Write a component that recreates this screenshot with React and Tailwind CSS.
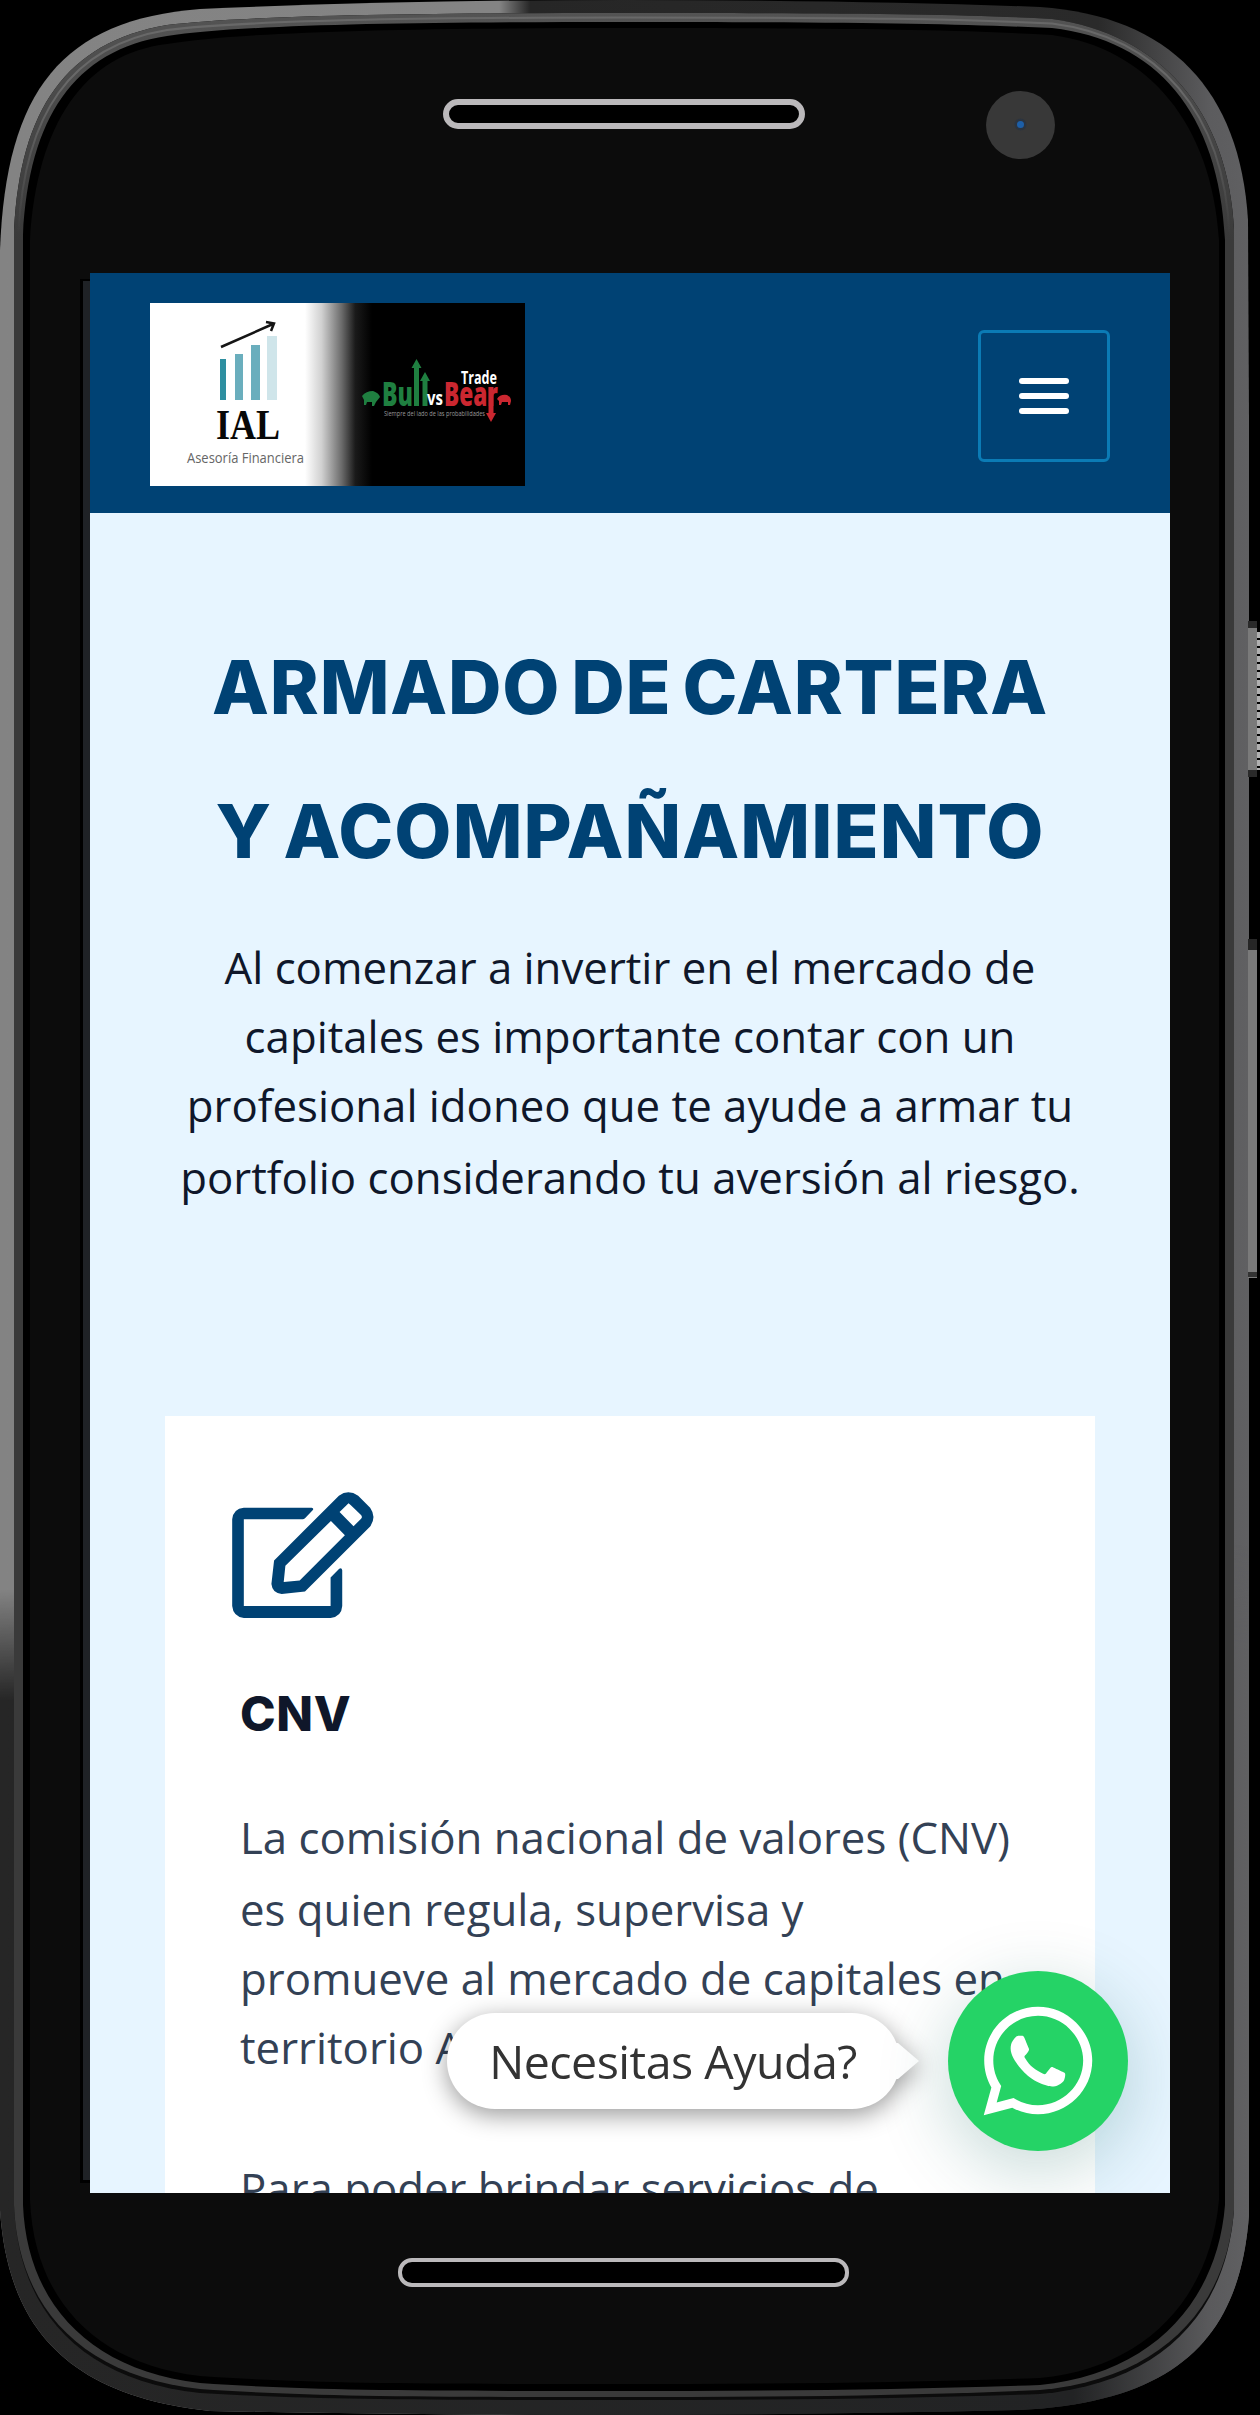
import React from "react";
import { FaWhatsapp } from "react-icons/fa";

function PhoneBody() {
  return (
    <svg className="absolute inset-0 h-[2415px] w-[1260px]" viewBox="0 0 1260 2415" fill="none">
      <defs>
        <linearGradient id="rim" x1="0" y1="0" x2="1248" y2="0" gradientUnits="userSpaceOnUse">
          <stop offset="0" stopColor="#838383" />
          <stop offset="0.4" stopColor="#848484" />
          <stop offset="0.425" stopColor="#262626" />
          <stop offset="0.88" stopColor="#2a2a2a" />
          <stop offset="0.97" stopColor="#5c5c5e" />
          <stop offset="1" stopColor="#606062" />
        </linearGradient>
        <linearGradient id="rimLow" x1="0" y1="0" x2="1248" y2="0" gradientUnits="userSpaceOnUse">
          <stop offset="0" stopColor="#262626" />
          <stop offset="0.86" stopColor="#222324" />
          <stop offset="0.97" stopColor="#5a5a5c" />
          <stop offset="1" stopColor="#606062" />
        </linearGradient>
        <linearGradient id="band" x1="0" y1="0" x2="0" y2="2400" gradientUnits="userSpaceOnUse">
          <stop offset="0" stopColor="#555" />
          <stop offset="0.1" stopColor="#3a3a3a" />
          <stop offset="1" stopColor="#3a3a3a" />
        </linearGradient>
        <linearGradient id="shine" x1="0" y1="90" x2="0" y2="235" gradientUnits="userSpaceOnUse">
          <stop offset="0" stopColor="#686868" />
          <stop offset="1" stopColor="#686868" stopOpacity="0" />
        </linearGradient>
        <linearGradient id="fade" x1="0" y1="1590" x2="4" y2="1700" gradientUnits="userSpaceOnUse">
          <stop offset="0" stopColor="#000" />
          <stop offset="1" stopColor="#fff" />
        </linearGradient>
        <mask id="low">
          <rect width="1260" height="2415" fill="url(#fade)" />
        </mask>
        <path
          id="outer"
          d="M0 250C6 90 62 20 200 9Q400 0 625 0Q860 0 1040 7C1170 16 1240 90 1248 220L1249 420L1249 2215C1240 2335 1180 2402 1020 2410Q800 2415 610 2415Q400 2415 210 2411C70 2396 8 2330 0 2210Z"
        />
      </defs>
      <use href="#outer" fill="url(#rim)" />
      <use href="#outer" fill="url(#rimLow)" mask="url(#low)" />
      <path
        d="M14 230C20 110 66 42 167 25C240 16 400 13 625 13C860 13 960 14 1052 19C1160 34 1228 110 1234 230L1234 2210C1226 2315 1160 2383 1040 2394C900 2399 760 2400 610 2400C400 2400 300 2399 200 2393C80 2380 18 2310 14 2205Z"
        fill="#0c0c0c"
      />
      <path
        d="M14 230C20 110 66 42 167 25C240 16 400 13 625 13C860 13 960 14 1052 19C1160 34 1228 110 1234 230L1234 2210C1226 2310 1160 2379 1040 2390C900 2396 760 2397 610 2397C400 2397 300 2396 200 2389C82 2376 18 2308 14 2205Z"
        fill="url(#band)"
      />
      <path
        d="M18.500 232C24.500 114 70 46 167 30C240 21 400 17.500 625 17.500C860 17.500 960 19 1052 23.500C1158 37 1224 111 1229.500 235"
        stroke="url(#shine)"
        strokeWidth="2"
      />
      <path
        d="M23 235C29 118 74 50 167 36C240 25 400 22 625 22C860 22 960 24 1052 28C1156 40 1219 112 1225 240L1225 2205C1217 2304 1150 2374 1040 2385C900 2390 760 2391 610 2391C400 2391 300 2390 200 2383C88 2370 27 2302 23 2205Z"
        fill="#000"
      />
      <path
        d="M30 240C37 124 84 54 167 44C240 32 400 28 625 28C860 28 960 30 1052 35C1148 48 1212 124 1219 240L1219 2200C1210 2298 1146 2368 1040 2378C900 2383 760 2384 610 2384C400 2384 300 2383 200 2376C94 2364 34 2298 30 2200Z"
        fill="#0c0c0c"
      />
      <rect x="80" y="279" width="10" height="1904" fill="#000" />
      <rect x="83" y="281" width="7" height="1899" fill="#1f2226" />
      <rect x="1248" y="621" width="9" height="156" fill="#7a7a7a" />
      <rect x="1248" y="621" width="9" height="7" fill="#2a2a2a" />
      <rect x="1248" y="770" width="9" height="7" fill="#2a2a2a" />
      <path d="M1258.500 632V770" stroke="#b0b0b0" strokeWidth="3" strokeDasharray="6 2" />
      <rect x="1248" y="939" width="9" height="339" fill="#7a7a7a" />
      <rect x="1248" y="939" width="9" height="11" fill="#262626" />
      <rect x="1248" y="1272" width="9" height="5" fill="#333" />
      <rect x="446" y="102" width="356" height="24" rx="12" fill="#000" stroke="#bbb9bb" strokeWidth="6" />
      <ellipse cx="1020.500" cy="125" rx="34.500" ry="34" fill="#383838" />
      <circle cx="1020.500" cy="124.500" r="6" fill="#2b3440" />
      <circle cx="1020.500" cy="124.500" r="3.500" fill="#1d5fa8" />
      <rect x="400" y="2260" width="447" height="25" rx="12" fill="#000" stroke="#bbb9bb" strokeWidth="4" />
    </svg>
  );
}

function Logo() {
  return (
    <svg className="h-[183px] w-[375px]" viewBox="0 0 375 183">
      <defs>
        <linearGradient id="split" x1="155" x2="222" y1="0" y2="0" gradientUnits="userSpaceOnUse">
          <stop offset="0" stopColor="#fff" />
          <stop offset="0.25" stopColor="#d0d0d0" />
          <stop offset="0.55" stopColor="#6a6a6a" />
          <stop offset="0.75" stopColor="#1a1a1a" />
          <stop offset="1" stopColor="#000" />
        </linearGradient>
      </defs>
      <rect width="375" height="183" fill="#fff" />
      <path d="M155 0H375V183H155Z" fill="url(#split)" />
      <rect x="70" y="56" width="6" height="41" fill="#2e8fa0" />
      <rect x="85" y="51" width="8" height="46" fill="#6aaebd" />
      <rect x="101" y="42" width="9" height="55" fill="#6aaebd" />
      <rect x="117" y="33" width="10" height="64" fill="#cfe5ea" />
      <path d="M71 44L123 21M116 19L124 20.500L121 28" fill="none" stroke="#151515" strokeWidth="2.500" />
      <text x="66" y="136" textLength="64" lengthAdjust="spacingAndGlyphs" className="font-['Liberation_Serif'] text-[43px] font-bold" fill="#080808">IAL</text>
      <text x="37" y="160" textLength="117" lengthAdjust="spacingAndGlyphs" className="font-['Open_Sans'] text-[14.500px]" fill="#666">Asesoría Financiera</text>
      <text x="232" y="103" textLength="31" lengthAdjust="spacingAndGlyphs" className="font-['Open_Sans'] text-[34px] font-extrabold" fill="#1f7f40">Bu</text>
      <path d="M266.500 103V64M275 103V76" stroke="#1f7f40" strokeWidth="5" />
      <path d="M266.500 56L271.500 65H261.500ZM275 69L280 78H270Z" fill="#1f7f40" />
      <text x="277" y="102" textLength="16" lengthAdjust="spacingAndGlyphs" className="font-['Open_Sans'] text-[20px] font-bold" fill="#fff">vs</text>
      <text x="294" y="103" textLength="54" lengthAdjust="spacingAndGlyphs" className="font-['Open_Sans'] text-[34px] font-extrabold" fill="#cb2730">Bear</text>
      <path d="M341 84V112" stroke="#cb2730" strokeWidth="5" />
      <path d="M341 119L336 110H346Z" fill="#cb2730" />
      <text x="311" y="81" textLength="36" lengthAdjust="spacingAndGlyphs" className="font-['Open_Sans'] text-[17px] font-bold" fill="#fff">Trade</text>
      <text x="234" y="113" textLength="101" lengthAdjust="spacingAndGlyphs" className="font-['Open_Sans'] text-[7.500px]" fill="#999">Siempre del lado de las probabilidades</text>
      <path d="M212 93Q216 88 223 88Q229 90 230 94L226 99L224 103H222V99H217L216 102H214V97Z" fill="#1f7f40" />
      <path d="M347 96Q350 91 357 92Q361 94 361 98L360 102H358V99H352L351 102H349V98Z" fill="#cb2730" />
    </svg>
  );
}

function EditIcon() {
  return (
    <svg className="h-[126px] w-[142px]" viewBox="217 275 426 379" fill="none">
      <path
        fill="#004274"
        fillRule="evenodd"
        d="M252 322H456Q464 324 459 330L436 354Q433 357 429 357H252V618H513V532L539 506Q546 501 548 510V618Q546 650 513 654H252Q220 650 217 618V357Q220 325 252 322ZM343 481L538 286Q566 265 596 286L632 322Q652 350 632 379L436 574L366 582Q338 580 335 552ZM377 497L372 546L420 541L556 405L514 362ZM540 335L567 309L574 315L603 343Q611 350 604 356L582 378Z"
      />
    </svg>
  );
}

export default function App() {
  return (
    <div className="relative h-[2415px] w-[1260px] overflow-hidden bg-black px-[90px] pt-[273px] font-['Open_Sans',sans-serif]">
      <PhoneBody />
      <main className="relative h-[1920px] w-[1080px] overflow-hidden bg-[#e7f5ff]">
        <header className="flex h-60 items-center justify-between bg-[#004274] px-[60px]">
          <div className="mt-[3px]"><Logo /></div>
          <button className="mt-[6px] flex h-[132px] w-[132px] flex-col items-center justify-center gap-[9px] rounded-[6px] border-[3px] border-[#0b7bb5]">
            <span className="h-[6px] w-[50px] rounded-full bg-white" />
            <span className="h-[6px] w-[50px] rounded-full bg-white" />
            <span className="h-[6px] w-[50px] rounded-full bg-white" />
          </button>
        </header>

        <section className="px-[75px] pt-[102px] text-center">
          <h1 className="font-['Inter'] text-[74px] leading-[144px] font-extrabold whitespace-nowrap text-[#004274] [word-spacing:-6px]">
            <span className="block tracking-[0.8px]">ARMADO DE CARTERA</span>
            <span className="block tracking-[1.1px]">Y ACOMPAÑAMIENTO</span>
          </h1>
          <p className="mt-[30px] text-[43.75px] whitespace-nowrap text-[#0f172a]">
            <span className="block leading-[69px]">Al comenzar a invertir en el mercado de</span>
            <span className="block leading-[69px]">capitales es importante contar con un</span>
            <span className="block leading-[69px]">profesional idoneo que te ayude a armar tu</span>
            <span className="block leading-[75px]">portfolio considerando tu aversión al riesgo.</span>
          </p>
        </section>

        <article className="mx-[75px] mt-[201px] h-[900px] bg-white pt-[76px] pl-[75px]">
          <div className="-ml-[8px]"><EditIcon /></div>
          <h2 className="mt-[60px] font-['Inter'] text-[48px] leading-[72px] font-extrabold tracking-[0.6px] text-[#0f172a]">CNV</h2>
          <div className="mt-[50px] text-[43.75px] whitespace-nowrap text-[#334155]">
            <p>
              <span className="block leading-[75px]">La comisión nacional de valores (CNV)</span>
              <span className="block leading-[69px]">es quien regula, supervisa y</span>
              <span className="block leading-[69px]">promueve al mercado de capitales en</span>
              <span className="block leading-[69px]">territorio Argentino.</span>
            </p>
            <p className="mt-[72px] leading-[69px]">Para poder brindar servicios de</p>
          </div>
        </article>

        <div className="absolute top-[1740px] left-[357px] flex h-24 w-[453px] items-center justify-center rounded-full bg-white text-[46.5px] text-[#333] drop-shadow-[0_6px_12px_rgba(0,0,0,0.4)]">
          <span className="mt-[2px] mr-[1px] tracking-[-0.5px]">Necesitas Ayuda?</span>
          <svg className="absolute top-[30px] -right-[19px] h-9 w-[26px]" viewBox="0 0 26 36">
            <path d="M0 0H5L26 18L5 36H0Z" fill="#fff" />
          </svg>
        </div>
        <div className="absolute top-[1698px] left-[858px] flex size-[180px] items-center justify-center rounded-full bg-[#25d366] shadow-[0_18px_72px_rgba(7,94,84,0.24)]">
          <FaWhatsapp className="size-[124px] text-white" />
        </div>
      </main>
    </div>
  );
}
